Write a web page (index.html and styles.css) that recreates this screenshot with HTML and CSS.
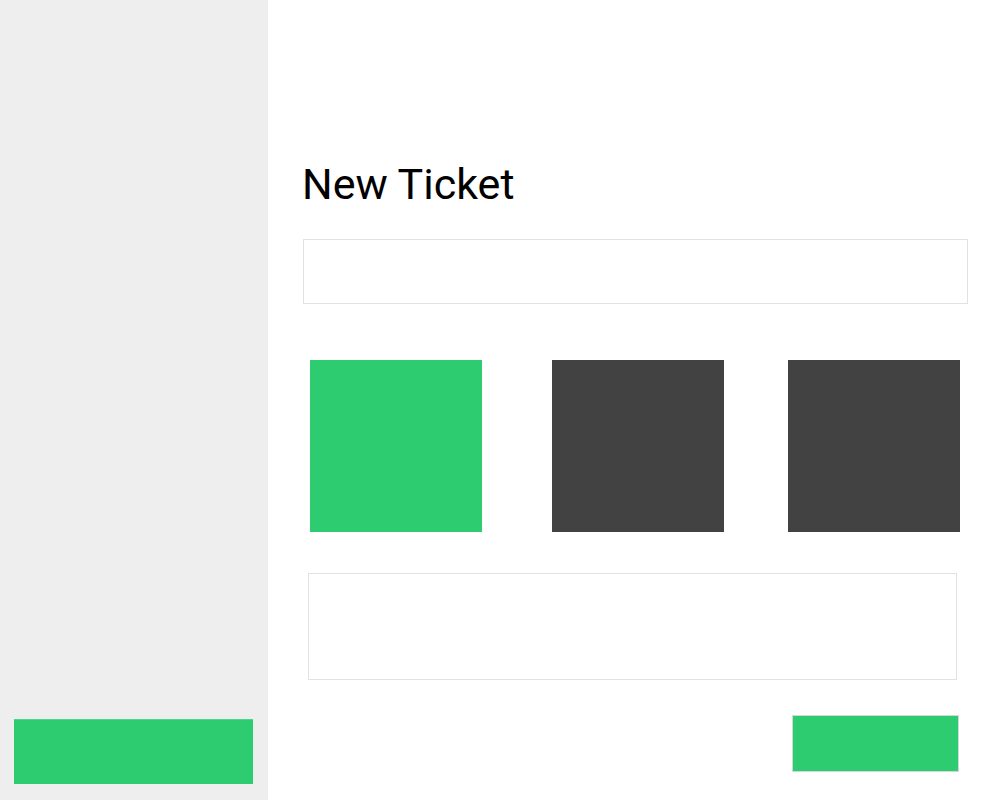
FILE: index.html
```html
<!DOCTYPE html>
<html>
<head>
<meta charset="utf-8">
<title>New Ticket</title>
<link rel="stylesheet" href="styles.css">
</head>
<body>
<div class="app">
  <aside class="sidebar">
    <button class="side-btn" type="button"></button>
  </aside>
  <main class="main">
    <h1 class="title">New Ticket</h1>
    <input class="field" type="text">
    <div class="tiles">
      <div class="tile tile-green"></div>
      <div class="tile tile-dark tile-2"></div>
      <div class="tile tile-dark tile-3"></div>
    </div>
    <textarea class="area"></textarea>
    <div class="actions">
      <button class="submit" type="button"></button>
    </div>
  </main>
</div>
</body>
</html>
```
FILE: styles.css
```css
html, body {
  margin: 0;
  padding: 0;
  background: #ffffff;
  font-family: Roboto, "Liberation Sans", sans-serif;
}

.app {
  display: flex;
  width: 1000px;
  height: 800px;
}

.sidebar {
  width: 268px;
  flex: 0 0 268px;
  background: #eeeeee;
  display: flex;
  flex-direction: column;
  justify-content: flex-end;
  padding: 0 15px 16px 14px;
  box-sizing: border-box;
}

.side-btn {
  width: 239px;
  height: 65px;
  border: 0;
  border-top: 1px solid #4fd58a;
  background: #2ecc71;
  padding: 0;
  margin: 0;
}

.main {
  flex: 1;
  display: flex;
  flex-direction: column;
  padding: 160px 0 0 34px;
  box-sizing: border-box;
}

.title {
  margin: 0;
  font-size: 43px;
  font-weight: 400;
  line-height: 49px;
  color: #000000;
}

.field {
  display: block;
  margin: 30px 0 0 1px;
  width: 665px;
  height: 65px;
  box-sizing: border-box;
  border: 1px solid #e2e2e2;
  background: #ffffff;
  padding: 0;
  outline: none;
}

.tiles {
  display: flex;
  margin: 56px 0 0 8px;
}

.tile {
  width: 172px;
  height: 172px;
  flex: 0 0 172px;
}

.tile-green {
  background: #2ecc71;
}

.tile-dark {
  background: #424242;
}

.tile-2 {
  margin-left: 70px;
}

.tile-3 {
  margin-left: 64px;
}

.area {
  display: block;
  margin: 41px 0 0 6px;
  width: 649px;
  height: 107px;
  box-sizing: border-box;
  border: 1px solid #e2e2e2;
  background: #ffffff;
  padding: 0;
  resize: none;
  outline: none;
}

.actions {
  display: flex;
  justify-content: flex-start;
  margin: 35px 0 0 490px;
}

.submit {
  width: 167px;
  height: 57px;
  box-sizing: border-box;
  border: 1px solid #d6d6d6;
  background: #2ecc71;
  padding: 0;
  margin: 0;
}
```
